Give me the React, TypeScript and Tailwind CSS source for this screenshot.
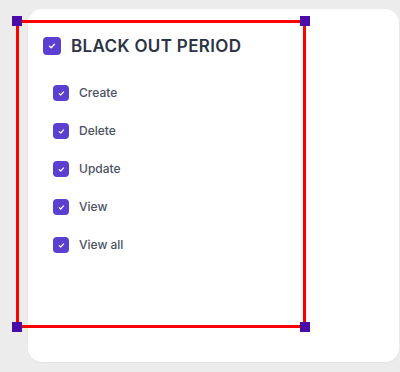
import React from "react";

function Check({ size }: { size: number }) {
  return (
    <div
      className="flex items-center justify-center rounded-[4px] bg-[#5a3fd1] shrink-0"
      style={{ width: size, height: size }}
    >
      <svg width={size * 0.55} height={size * 0.55} viewBox="0 0 12 12" fill="none">
        <path d="M3 6.3 L5.1 8.2 L9 4" stroke="white" strokeWidth="1.6" strokeLinecap="round" strokeLinejoin="round" />
      </svg>
    </div>
  );
}

const items = ["Create", "Delete", "Update", "View", "View all"];

function Handle({ pos }: { pos: string }) {
  return <div className={`absolute w-[10px] h-[10px] bg-[#4a0ca6] ${pos}`} />;
}

export default function App() {
  return (
    <div className="relative w-[400px] h-[372px] bg-[#ececec] pl-[28px] pt-[9px] pr-[1px] pb-[10px]" style={{ fontFamily: "Inter, 'Noto Sans', sans-serif" }}>
      <div className="h-full w-full bg-white rounded-[14px] shadow-[0_1px_2px_rgba(0,0,0,0.04)] pl-[15px] pt-[28px]">
        <div className="flex items-center gap-[10px] h-[18px]">
          <Check size={18} />
          <span className="text-[17px] font-semibold text-[#2b3445] tracking-[0.35px] leading-none">BLACK OUT PERIOD</span>
        </div>
        <div className="flex flex-col pl-[10px] mt-[19px]">
          {items.map((t) => (
            <div key={t} className="flex items-center gap-[10px] h-[38px]">
              <Check size={16} />
              <span className="text-[12px] font-medium text-[#4a5162] leading-none">{t}</span>
            </div>
          ))}
        </div>
      </div>
      <div className="absolute left-[16px] top-[20px] w-[290px] h-[308px] border-[3px] border-[#ff0000] pointer-events-none">
        <Handle pos="-left-[7px] -top-[7px]" />
        <Handle pos="-right-[7px] -top-[7px]" />
        <Handle pos="-left-[7px] -bottom-[7px]" />
        <Handle pos="-right-[7px] -bottom-[7px]" />
      </div>
    </div>
  );
}
